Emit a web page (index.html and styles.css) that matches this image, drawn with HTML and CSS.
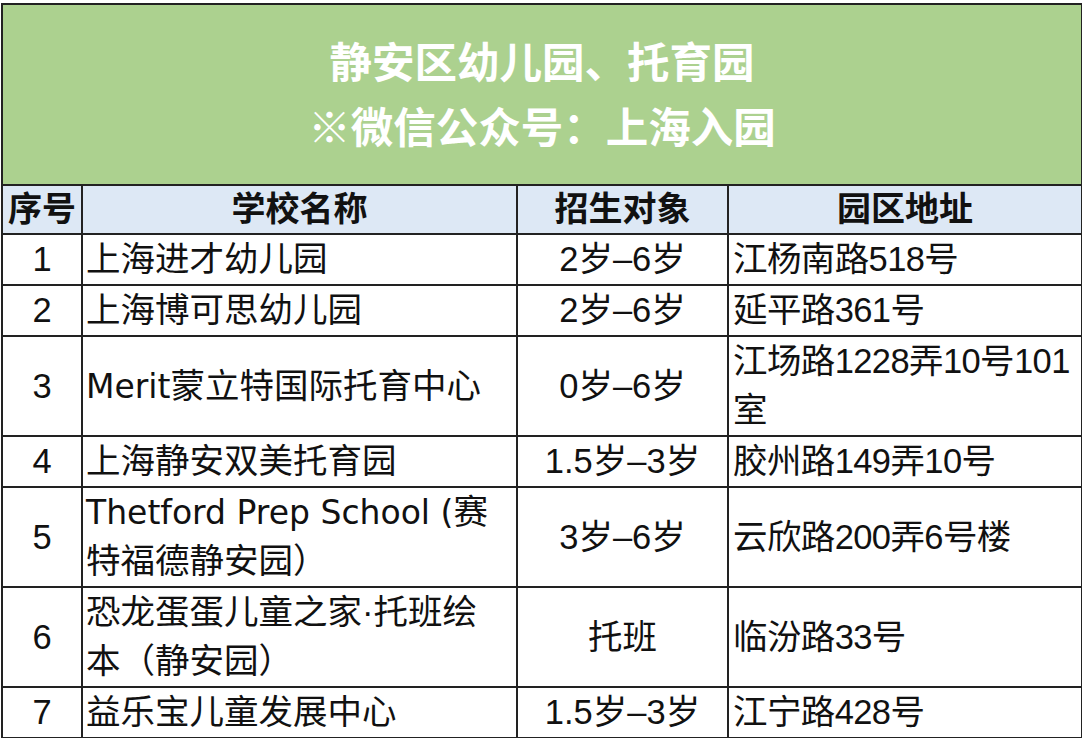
FILE: index.html
```html
<!DOCTYPE html>
<html lang="zh-CN">
<head>
<meta charset="utf-8">
<title>静安区幼儿园、托育园</title>
<link rel="stylesheet" href="styles.css">
</head>
<body>
<div class="sheet">
  <table class="list">
    <colgroup>
      <col class="c-no">
      <col class="c-name">
      <col class="c-age">
      <col class="c-addr">
    </colgroup>
    <thead>
      <tr class="title-row">
        <th colspan="4" class="title">静安区幼儿园、托育园<br>※微信公众号：上海入园</th>
      </tr>
      <tr class="head-row">
        <th>序号</th>
        <th>学校名称</th>
        <th>招生对象</th>
        <th>园区地址</th>
      </tr>
    </thead>
    <tbody>
      <tr class="single">
        <td class="no">1</td>
        <td class="name">上海进才幼儿园</td>
        <td class="age">2岁–6岁</td>
        <td class="addr">江杨南路518号</td>
      </tr>
      <tr class="single">
        <td class="no">2</td>
        <td class="name">上海博可思幼儿园</td>
        <td class="age">2岁–6岁</td>
        <td class="addr">延平路361号</td>
      </tr>
      <tr class="double">
        <td class="no">3</td>
        <td class="name"><span class="latin">Merit</span>蒙立特国际托育中心</td>
        <td class="age">0岁–6岁</td>
        <td class="addr">江场路1228弄10号101<br>室</td>
      </tr>
      <tr class="single">
        <td class="no">4</td>
        <td class="name">上海静安双美托育园</td>
        <td class="age">1.5岁–3岁</td>
        <td class="addr">胶州路149弄10号</td>
      </tr>
      <tr class="double">
        <td class="no">5</td>
        <td class="name"><span class="latin">Thetford Prep School (</span>赛<br>特福德静安园）</td>
        <td class="age">3岁–6岁</td>
        <td class="addr">云欣路200弄6号楼</td>
      </tr>
      <tr class="double">
        <td class="no">6</td>
        <td class="name">恐龙蛋蛋儿童之家·托班绘<br>本（静安园）</td>
        <td class="age">托班</td>
        <td class="addr">临汾路33号</td>
      </tr>
      <tr class="single">
        <td class="no">7</td>
        <td class="name">益乐宝儿童发展中心</td>
        <td class="age">1.5岁–3岁</td>
        <td class="addr">江宁路428号</td>
      </tr>
    </tbody>
  </table>
</div>
</body>
</html>
```

FILE: styles.css
```css
html, body {
  margin: 0;
  padding: 0;
  background: #ffffff;
}

.sheet {
  padding: 3px 0 0 1px;
}

.list {
  border-collapse: collapse;
  table-layout: fixed;
  width: 1080px;
  font-family: "Liberation Sans", "Noto Sans CJK SC", sans-serif;
  font-size: 34.5px;
  color: #111111;
}

.c-no { width: 80px; }
.c-name { width: 435px; }
.c-age { width: 211px; }
.c-addr { width: 354px; }

.list th,
.list td {
  border: 2px solid #222222;
  padding: 0;
  line-height: 49px;
  white-space: nowrap;
  vertical-align: middle;
}

.title-row .title {
  height: 177px;
  background: #acd18f;
  color: #ffffff;
  font-size: 42.5px;
  font-weight: 700;
  line-height: 65px;
  text-align: center;
  padding-top: 2px;
}

.head-row th {
  height: 47px;
  background: #dde8f5;
  font-weight: 700;
  font-size: 34px;
  text-align: center;
  line-height: 47px;
}

.single td {
  height: 48px;
}

.double td {
  height: 98px;
}

.no {
  text-align: center;
}

.name {
  text-align: left;
  padding-left: 3px !important;
}

.age {
  text-align: center;
}

.addr {
  text-align: left;
  padding-left: 4px !important;
  letter-spacing: -0.6px;
}

.latin {
  font-family: "DejaVu Sans", sans-serif;
  font-size: 33px;
}
```
